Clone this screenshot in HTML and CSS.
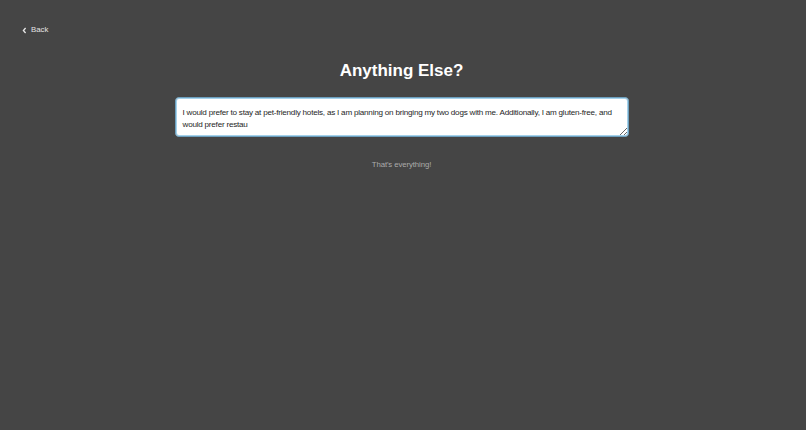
FILE: index.html
```html
<!DOCTYPE html>
<html>
<head>
<meta charset="utf-8">
<link rel="stylesheet" href="styles.css">
</head>
<body>
<div class="page">
  <a class="back" href="#"><svg class="chev" width="5" height="7" viewBox="0 0 5 7"><path d="M3.6 1 L1.4 3.5 L3.6 6" fill="none" stroke="#e8e8e8" stroke-width="1.3"/></svg><span>Back</span></a>
  <h1 class="title">Anything Else?</h1>
  <div class="field">
    <textarea class="input">I would prefer to stay at pet-friendly hotels, as I am planning on bringing my two dogs with me. Additionally, I am gluten-free, and would prefer restau</textarea>
  </div>
  <p class="done">That's everything!</p>
</div>
</body>
</html>
```
FILE: styles.css
```css
html, body {
  margin: 0;
  padding: 0;
  background: #454545;
  font-family: "Liberation Sans", Arial, sans-serif;
}
.page {
  display: flex;
  flex-direction: column;
  align-items: center;
  padding: 23px 3px 0 0;
}
.back {
  align-self: flex-start;
  margin-left: 22px;
  display: flex;
  align-items: center;
  gap: 4px;
  color: #e4e4e4;
  text-decoration: none;
  font-size: 7.8px;
  line-height: 14px;
  height: 14px;
}
.title {
  margin: 22px 0 0;
  font-size: 17px;
  font-weight: bold;
  color: #ffffff;
  line-height: 24px;
}
.field {
  margin-top: 14px;
}
.input {
  display: block;
  box-sizing: border-box;
  width: 454px;
  height: 40px;
  border: 1px solid #6c9fbe;
  box-shadow: inset 0 0 0 1px #a6d2ea;
  border-radius: 4px;
  background: #ffffff;
  color: #1e1e1e;
  font-family: "Liberation Sans", Arial, sans-serif;
  font-size: 8.1px;
  letter-spacing: -0.22px;
  line-height: 11.5px;
  padding: 9px 7px 7px;
  resize: both;
  outline: none;
}
.done {
  margin: 23px 0 0;
  font-size: 7.8px;
  letter-spacing: -0.1px;
  line-height: 10px;
  color: #ababab;
}
```
